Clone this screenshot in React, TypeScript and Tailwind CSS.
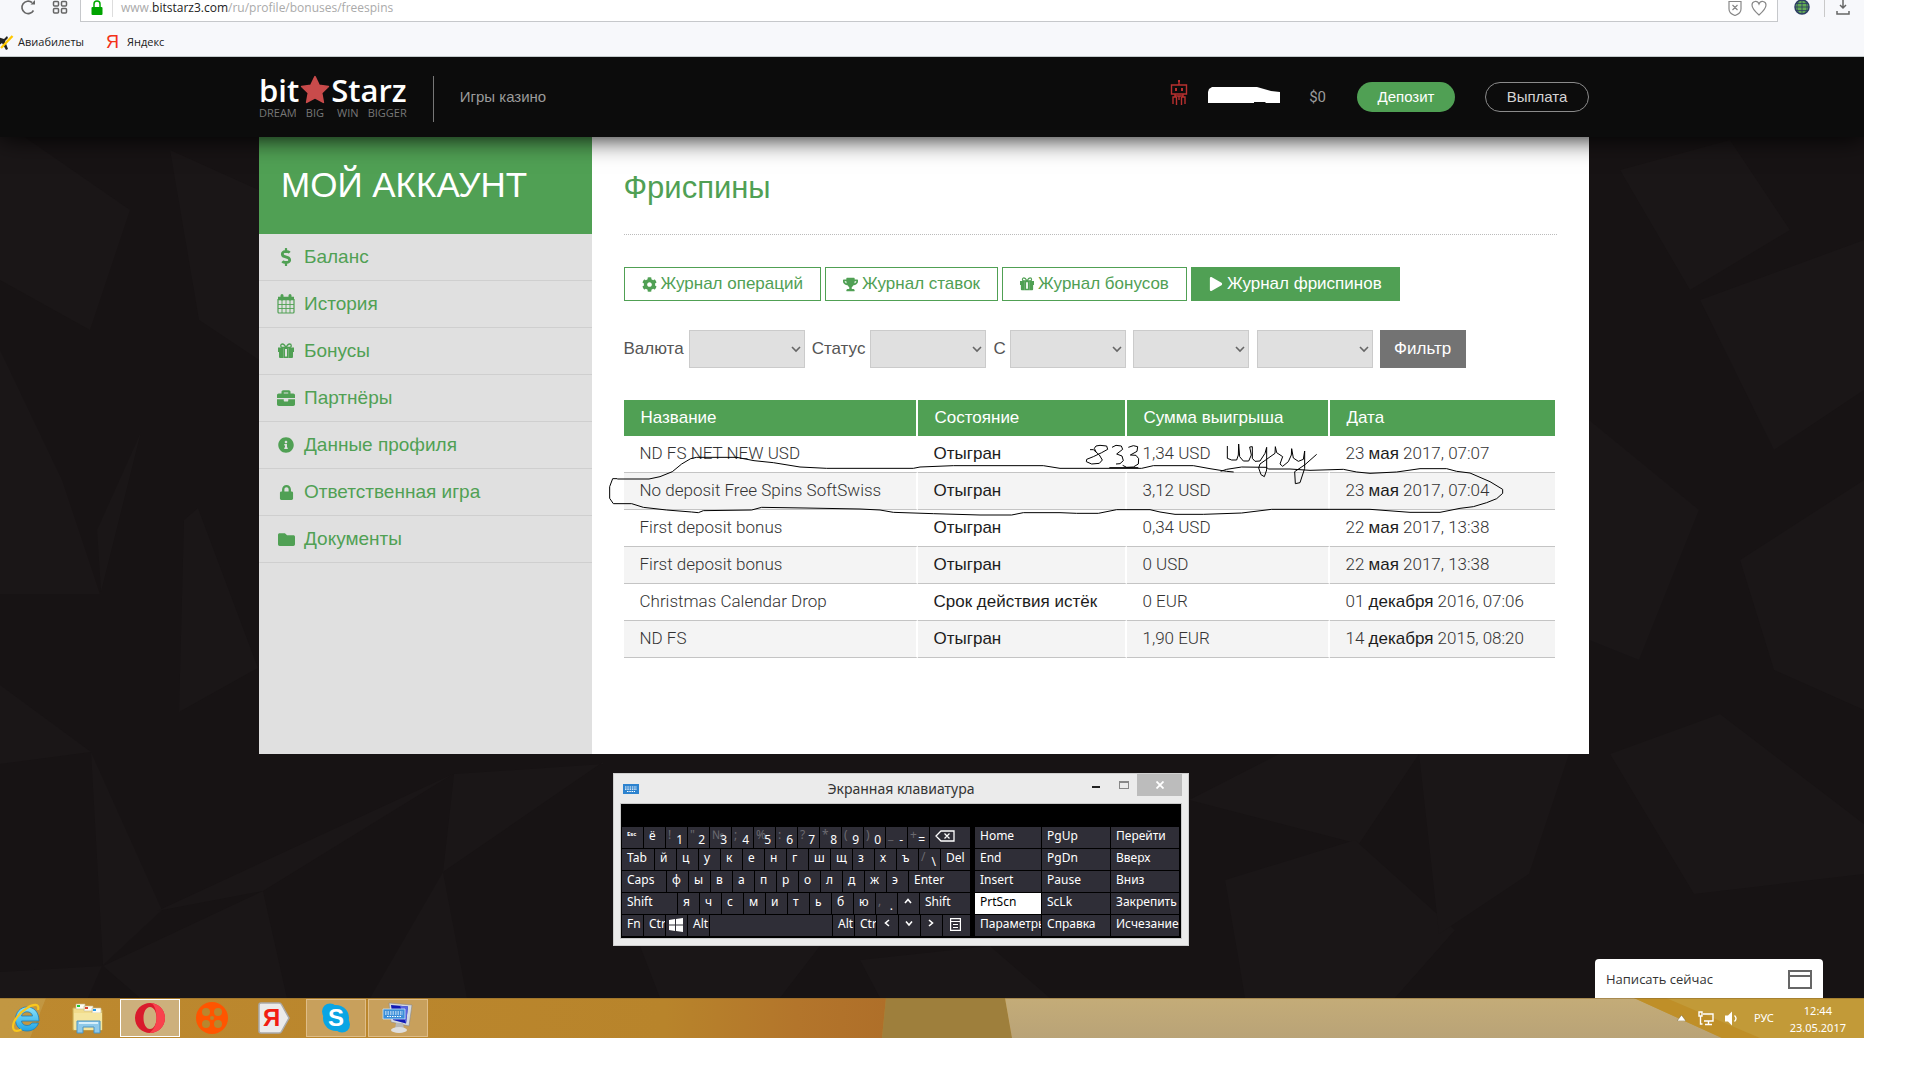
import clsx from "clsx";
import { ReactNode } from "react";
import {
	FaBriefcase,
	FaCog,
	FaDollarSign,
	FaFolder,
	FaInfoCircle,
	FaLock,
	FaPlay,
	FaTrophy,
} from "react-icons/fa";

interface SpinRow {
	name: string;
	state: string;
	amount: string;
	day: string;
	month: string;
	time: string;
}

interface KeyDef {
	label: ReactNode;
	alt?: string;
	width?: string;
}

const spins: SpinRow[] = [
	{ name: "ND FS NET NEW USD", state: "Отыгран", amount: "1,34 USD", day: "23", month: "мая", time: "2017, 07:07" },
	{ name: "No deposit Free Spins SoftSwiss", state: "Отыгран", amount: "3,12 USD", day: "23", month: "мая", time: "2017, 07:04" },
	{ name: "First deposit bonus", state: "Отыгран", amount: "0,34 USD", day: "22", month: "мая", time: "2017, 13:38" },
	{ name: "First deposit bonus", state: "Отыгран", amount: "0 USD", day: "22", month: "мая", time: "2017, 13:38" },
	{ name: "Christmas Calendar Drop", state: "Срок действия истёк", amount: "0 EUR", day: "01", month: "декабря", time: "2016, 07:06" },
	{ name: "ND FS", state: "Отыгран", amount: "1,90 EUR", day: "14", month: "декабря", time: "2015, 08:20" },
];

const CalendarIcon = () => (
	<svg className="w-[18px] h-5" fill="none" stroke="currentColor" viewBox="0 0 18 20">
		<path d="M1 5.500h16V18a1 1 0 0 1-1 1H2a1 1 0 0 1-1-1z" strokeWidth="1.200" />
		<path d="M1 4.500h16" strokeWidth="3.500" />
		<path d="M5 1.500v3.500M13 1.500v3.500" strokeLinecap="round" strokeWidth="3" />
		<path d="M5 6v13M9 6v13M13 6v13M1 10.500h16M1 14.500h16" strokeWidth="0.900" />
	</svg>
);

const GiftIcon = ({ className }: { className: string }) => (
	<svg className={className} fill="currentColor" viewBox="0 0 16 16">
		<path d="M0 4.500h5.500v4.500H0zM10.500 4.500H16v4.500h-5.500zM1 9h4.500v6H2a1 1 0 0 1-1-1zM10.500 9H15v5a1 1 0 0 1-1 1h-3.500z" />
		<path d="M5.500 4.500h5V15h-5zM7 6v7.500h2V6z" fillRule="evenodd" />
		<path d="M8 4.500C7 2.500 6 1 4.500 1a1.750 1.750 0 0 0 0 3.500zM8 4.500C9 2.500 10 1 11.500 1a1.750 1.750 0 0 1 0 3.500z" fill="none" stroke="currentColor" strokeWidth="1.300" />
	</svg>
);

const menu = [
	{ label: "Баланс", icon: <FaDollarSign className="size-[18px]" /> },
	{ label: "История", icon: <CalendarIcon /> },
	{ label: "Бонусы", icon: <GiftIcon className="size-4" /> },
	{ label: "Партнёры", icon: <FaBriefcase className="size-[18px]" /> },
	{ label: "Данные профиля", icon: <FaInfoCircle className="size-4" /> },
	{ label: "Ответственная игра", icon: <FaLock className="size-[15px]" /> },
	{ label: "Документы", icon: <FaFolder className="size-[17px]" /> },
];

const tabs = [
	{ label: "Журнал операций", icon: <FaCog className="size-[15px]" /> },
	{ label: "Журнал ставок", icon: <FaTrophy className="size-[15px]" /> },
	{ label: "Журнал бонусов", icon: <GiftIcon className="size-[14px]" /> },
	{ label: "Журнал фриспинов", icon: <FaPlay className="size-[14px]" />, active: true },
];

const letters = (text: string): KeyDef[] =>
	text.split("").map((label) => ({ label }));

const Arrow = ({ d }: { d: string }) => (
	<svg className="size-[10px]" fill="none" stroke="white" strokeWidth="1.600" viewBox="0 0 10 10">
		<path d={d} />
	</svg>
);

const keyRows: KeyDef[][] = [
	[
		{ label: <span className="text-[6px] font-bold block -mt-1">Esc</span> },
		{ label: "ё" },
		{ label: "1", alt: "!" },
		{ label: "2", alt: '"' },
		{ label: "3", alt: "№" },
		{ label: "4", alt: ";" },
		{ label: "5", alt: "%" },
		{ label: "6", alt: ":" },
		{ label: "7", alt: "?" },
		{ label: "8", alt: "*" },
		{ label: "9", alt: "(" },
		{ label: "0", alt: ")" },
		{ label: "-", alt: "_" },
		{ label: "=", alt: "+" },
		{
			label: (
				<svg className="w-5 h-3" fill="none" stroke="white" strokeWidth="1.300" viewBox="0 0 20 12">
					<path d="M6 1h13v10H6L1 6zM9.500 3.500l5 5M14.500 3.500l-5 5" />
				</svg>
			),
			width: "w-10",
		},
	],
	[
		{ label: "Tab", width: "w-8" },
		...letters("йцукенгшщзхъ"),
		{ label: "\\", alt: "/" },
		{ label: "Del", width: "w-[29px]" },
	],
	[
		{ label: "Caps", width: "w-11" },
		...letters("фывапролджэ"),
		{ label: "Enter", width: "w-[61px]" },
	],
	[
		{ label: "Shift", width: "w-[55px]" },
		...letters("ячсмитьбю"),
		{ label: ".", alt: "," },
		{ label: <Arrow d="M2 7l3-3.500L8 7" /> },
		{ label: "Shift", width: "w-[50px]" },
	],
	[
		{ label: "Fn" },
		{ label: "Ctrl" },
		{
			label: (
				<svg className="-ml-[2px] size-[14px]" fill="white" viewBox="0 0 14 14">
					<path d="M0 2l6-1v5.500H0zM7 .9L14 0v6.500H7zM0 7.500h6V13l-6-1zM7 7.500h7V14l-7-.9z" />
				</svg>
			),
		},
		{ label: "Alt" },
		{ label: "", width: "w-[122px]" },
		{ label: "Alt" },
		{ label: "Ctrl" },
		{ label: <Arrow d="M7 2L3.500 5 7 8" /> },
		{ label: <Arrow d="M2 3.500L5 7l3-3.500" /> },
		{ label: <Arrow d="M3 2l3.500 3L3 8" /> },
		{
			label: (
				<svg className="ml-[2px] w-[11px] h-[13px]" fill="none" stroke="white" strokeWidth="1.200" viewBox="0 0 11 13">
					<path d="M.6.6h9.800v11.800H.6zM.6 3.500h9.800M3 6.500h5M3 9.500h5" />
				</svg>
			),
			width: "w-[27px]",
		},
	],
];

const sideKeys = [
	["Home", "PgUp", "Перейти"],
	["End", "PgDn", "Вверх"],
	["Insert", "Pause", "Вниз"],
	["PrtScn", "ScLk", "Закрепить"],
	["Параметры", "Справка", "Исчезание"],
];

const BrowserChrome = () => (
	<div className="relative z-20 bg-[#f7f8fb] border-b border-[#c4cbcc] font-['Open_Sans','Noto_Sans',sans-serif]">
		<div className="flex items-start h-[22px] pr-[14px]">
			<button aria-label="Обновить" className="ml-5 w-4">
				<svg className="size-4" fill="none" stroke="#666" strokeWidth="1.600" viewBox="0 0 16 16">
					<path d="M13.500 10.500A6.200 6.200 0 1 1 12 2.500" />
					<path d="M10.500 4.500H15V0z" fill="#666" stroke="none" />
				</svg>
			</button>
			<button aria-label="Экспресс-панель" className="ml-4 w-4">
				<svg className="size-4" fill="none" stroke="#666" strokeWidth="1.500" viewBox="0 0 16 16">
					<rect height="4.500" rx="1" width="5" x="1.500" y="1.500" />
					<rect height="4.500" rx="1" width="5" x="9.500" y="1.500" />
					<rect height="4.500" rx="1" width="5" x="1.500" y="8.500" />
					<rect height="4.500" rx="1" width="5" x="9.500" y="8.500" />
				</svg>
			</button>
			<div className="ml-3 flex-1 flex items-start h-[22px] bg-white border-b border-x border-[#c6c8cb] pl-[10px] pr-[10px]">
				<svg className="w-3 h-[15px]" viewBox="0 0 12 15">
					<path d="M3 7V4a3 3 0 0 1 6 0v3" fill="none" stroke="#0a0" strokeWidth="1.500" />
					<rect fill="#00a300" height="8" rx="1" width="11" x=".5" y="7" />
				</svg>
				<span className="ml-[9px] w-px h-[17px] bg-[#ddd]" />
				<span className="ml-2 flex-1 text-xs text-[#aaa]">
					www.<span className="text-[#222]">bitstarz3.com</span>
					/ru/profile/bonuses/freespins
				</span>
				<svg className="w-[14px] h-4" fill="none" stroke="#888" strokeWidth="1.200" viewBox="0 0 14 16">
					<path d="M1 1.500h12V9c0 3-3 5.500-6 6.500C4 14.500 1 12 1 9zM4.500 5l5 5M9.500 5l-5 5" />
				</svg>
				<svg className="ml-[9px] w-4 h-4" fill="none" stroke="#888" strokeWidth="1.200" viewBox="0 0 16 16">
					<path d="M8 15C4 11.500 1 8.500 1 5c0-4 5.500-5 7-1 1.500-4 7-3 7 1 0 3.500-3 6.500-7 10z" />
				</svg>
			</div>
			<svg className="ml-4 size-4" fill="none" viewBox="0 0 16 16">
				<circle cx="8" cy="7" fill="#63ab54" r="7" stroke="#2c3d63" strokeWidth="1.500" />
				<path d="M8 0v14M1 7h14M2 3.500h12M2 10.500h12M4.500 1.500c-2 4-2 7 0 11M11.500 1.500c2 4 2 7 0 11" stroke="#2c3d63" strokeWidth=".8" />
			</svg>
			<span className="ml-[14px] w-px h-[17px] bg-[#c9c9c9]" />
			<svg className="ml-[11px] w-[14px] h-4" fill="none" stroke="#666" strokeWidth="1.500" viewBox="0 0 14 16">
				<path d="M7 0v8M4 5l3 3 3-3M1 11v3h12v-3" />
			</svg>
		</div>
		<div className="flex items-center h-[34px] pb-1 pt-[10px] text-[11px] text-[#222]">
			<a className="flex items-center gap-1" href="#avia">
				<svg className="w-[14px] h-4" viewBox="3 0 14 16">
					<path d="M0 3l7 2 3-3 1 2-3 3 3 8-2 1-4-7-5 4z" fill="#222" />
					<path d="M4 14L15.500 2" stroke="#ffc800" strokeWidth="2.400" />
				</svg>
				Авиабилеты
			</a>
			<a className="ml-[22px] flex items-center gap-2" href="#yandex">
				<span className="text-lg leading-4 text-[#f33219] font-['Liberation_Sans',sans-serif]">Я</span>
				Яндекс
			</a>
		</div>
	</div>
);

const Header = () => (
	<header className="relative z-10 bg-[#0c0c0c] pr-4 shadow-[0_0_25px_#000] text-[15px]">
		<div className="mx-auto max-w-[1330px] h-20 flex items-center">
			<a className="block" href="#home">
				<span className="flex items-center text-white font-['Open_Sans',sans-serif] font-semibold text-[31px] leading-[30px]">
					bit
					<svg className="size-[30px] mx-px" fill="#c94b4b" viewBox="0 0 28 28">
						<path d="M14 1.500l3.800 8 8.700 1.200-6.300 6.100 1.600 8.700-7.800-4.200-7.800 4.200 1.600-8.700-6.300-6.100 8.700-1.200z" stroke="#c94b4b" strokeLinejoin="round" strokeWidth="1.500" />
					</svg>
					Starz
				</span>
				<span className="mt-px flex justify-between text-[11px] leading-[14px] text-[#777] font-['Open_Sans',sans-serif]">
					<span>DREAM</span>
					<span>BIG</span>
					<span className="ml-1">WIN</span>
					<span>BIGGER</span>
				</span>
			</a>
			<span className="ml-[26px] mt-1 w-px h-[46px] bg-[#777]" />
			<a className="ml-[26px] text-[#9b9b9b]" href="#games">
				Игры казино
			</a>
			<svg className="ml-auto mb-2 w-[18px] h-[26px]" fill="none" stroke="#b8302f" strokeWidth="1.400" viewBox="0 0 18 26">
				<path d="M1.500 5h15v9h-15zM9 5V1M5 14v2h8v-2M3 24v-7h3M6.500 25v-8M9 20v-4M11.500 25v-8M12 17h3v7" />
				<path d="M6 8v3M12 8v3M9 0v2" strokeWidth="2" />
			</svg>
			<svg className="ml-5 w-[72px] h-[18px] mb-1" fill="white" viewBox="0 0 72 18">
				<path d="M1 3l3-2 45 0 7 2 7 2 9 1v11H58l-1-1H46v1H0V6z" />
			</svg>
			<span className="ml-[29px] text-[#9b9b9b] font-['Roboto',sans-serif]">$0</span>
			<button className="ml-[31px] h-[30px] w-[98px] rounded-full bg-[#50a054] text-white">
				Депозит
			</button>
			<button className="ml-[30px] h-[30px] w-[104px] rounded-full border border-[#8b8b8b] text-[#d5d5d5]">
				Выплата
			</button>
		</div>
	</header>
);

const Backdrop = () => (
	<svg className="absolute inset-0 w-full h-full" preserveAspectRatio="none" viewBox="0 57 1864 941">
		<rect fill="#171314" height="941" width="1864" y="57" />
		<g fill="#1a1617">
			<path d="M0 594h100L62 480 0 350z" />
			<path d="M97 530l4 62 40-160z" />
			<path d="M184 520l-5 192 79-44-60-160z" />
			<path d="M0 685l91 67-91 12z" />
			<path d="M91 752l12 213 59-55z" />
			<path d="M157 911l296-137-190 117z" />
			<path d="M103 966l160-75 24 107H140z" />
			<path d="M454 774l-11 98 160-110V764z" />
			<path d="M443 872l-73 126h97z" />
			<path d="M0 972l102-6-14 32H0z" />
			<path d="M0 120l130 90-40 120L0 280z" />
			<path d="M170 150l89 40v170l-60-40z" />
			<path d="M1189 800l90-46h140l-60 90z" />
			<path d="M1225 880l130-40 100 90-60 68h-150z" />
			<path d="M1419 754h150l-40 120-90 60z" />
			<path d="M1589 420l110 90-60 150-50-20z" />
			<path d="M1700 300l164-60v150l-90 60z" />
			<path d="M1740 560l124-80v230l-90-40z" />
			<path d="M1620 170l110-30 60 90-100 60z" />
			<path d="M1610 754l110-40 144 110v50l-170 20z" />
			<path d="M640 946h180l-40 52H660z" />
			<path d="M860 960l130-14 60 52H880z" />
		</g>
	</svg>
);

const Sidebar = () => (
	<aside className="w-1/4 bg-[#e0e0e0] text-[#50a054]">
		<h1 className="h-[97px] pl-[22px] pt-[27px] bg-[#50a054] text-white text-[35px] leading-[42px]">
			МОЙ АККАУНТ
		</h1>
		<nav>
			{menu.map(({ label, icon }) => (
				<a
					className="flex items-center h-[47px] pl-4 border-b border-[#cfcfcf] text-[19px]"
					href="#account"
					key={label}
				>
					<span className="w-[22px] mr-[7px] flex justify-center">{icon}</span>
					{label}
				</a>
			))}
		</nav>
	</aside>
);

const FilterSelect = ({ label, className }: { label: string; className?: string }) => (
	<span className={clsx("relative block", className)}>
		<select
			aria-label={label}
			className="block appearance-none w-[116px] h-[38px] bg-[#e0e0e0] border border-[#cbcbcb]"
		/>
		<svg className="pointer-events-none absolute right-1 top-4 w-[10px] h-[7px]" fill="none" stroke="#666" strokeWidth="1.600" viewBox="0 0 10 7">
			<path d="M1 1l4 4 4-4" />
		</svg>
	</span>
);

/* Pen marks drawn over the table */
const Ink = () => (
	<svg
		className="pointer-events-none absolute -left-6 top-[30px] w-[940px] h-[100px]"
		fill="none"
		stroke="black"
		strokeLinejoin="round"
		strokeWidth="3"
		viewBox="0 120 2820 300"
	>
		<path d="M52 267H147L180 260 217 245 245 222 272 206 290 202H410L462 212 520 218 600 231 680 235H940L960 231 1060 227H1330L1380 235H1625" />
		<path d="M1380 368H1270L1235 375H1140L1000 371 880 367 840 360 780 357 615 354 485 352 455 360 310 362 295 368 275 366 200 360 130 352 95 341H40L29 325V290L38 266H52" />
		<g transform="translate(1380 0)">
			<path d="M245 235L280 227H400L450 236 500 244 521 246M482 244L500 238 545 231 620 232 625 237H690L750 241 850 238 890 246 930 250 1010 246 1080 236H1160L1190 244 1230 249 1260 262 1290 275 1328 298V310L1310 326 1280 338 1240 350 1200 355 1140 367H1050L930 358H635L545 369 430 373H345L300 366 270 359H170L115 370H50L0 368" />
			<path d="M90 179h10l8 7M108 186L103 175 108 168 120 166 140 168 143 178 125 188 100 200 80 208 79 215 95 222 118 220 127 210 118 195 108 186" />
			<path d="M156 172L168 166 184 168 188 178 170 192 186 198 190 212 180 221 168 222M148 233H235" />
			<path d="M205 172L220 167 233 170 231 184 211 195 228 196 236 206 235 222 220 231 200 232 188 226" />
			<path d="M502 168V205L515 210 530 210 535 195 536 162 539 200 550 213 566 213 574 195 569 171 577 170V205L585 214 600 213 615 190 620 172V240L613 260 603 254 596 234 600 222 645 190 646 170 650 188 668 200 660 222 668 229 685 215 694 195 695 176 700 204 715 214 730 208 734 183V235L720 278 706 281 704 245 735 224 770 193" />
		</g>
	</svg>
);

const SpinsTable = () => (
	<div className="relative mt-8">
		<table className="w-[calc(100%-2px)] table-fixed border-separate border-spacing-0 text-left text-[17px]">
			<colgroup>
				<col className="w-[294px]" />
				<col className="w-[209px]" />
				<col className="w-[203px]" />
				<col />
			</colgroup>
			<thead>
				<tr className="h-9 bg-[#50a054] text-white">
					{["Название", "Состояние", "Сумма выигрыша", "Дата"].map((title) => (
						<th
							className="pl-[17px] font-normal border-r-2 border-white last:border-r-0"
							key={title}
						>
							{title}
						</th>
					))}
				</tr>
			</thead>
			<tbody>
				{spins.map((row, index) => (
					<tr
						className="h-[37px] even:bg-[#f4f4f4] font-['Roboto',sans-serif] font-light text-[#333] [&>td]:border-b [&>td]:border-b-[#c4c4c4] [&>td]:pl-4"
						key={index}
					>
						<td className="border-r-2 border-r-white">{row.name}</td>
						<td className="border-r-2 border-r-white font-['Liberation_Sans',sans-serif] text-[#1c1c1c]">
							{row.state}
						</td>
						<td className="border-r-2 border-r-white">{row.amount}</td>
						<td>
							{row.day}{" "}
							<span className="font-['Liberation_Sans',sans-serif] text-[#1c1c1c]">
								{row.month}
							</span>{" "}
							{row.time}
						</td>
					</tr>
				))}
			</tbody>
		</table>
		<Ink />
	</div>
);

const Content = () => (
	<main className="flex-1 bg-white px-8 pb-24">
		<h2 className="h-[97px] pt-[33px] text-[31px] leading-9 text-[#50a054]">Фриспины</h2>
		<hr className="border-0 border-t border-dotted border-[#bbb]" />
		<div className="mt-8 flex gap-1">
			{tabs.map(({ label, icon, active }) => (
				<button
					className={clsx(
						"h-[34px] px-[17px] flex items-center gap-1 border border-[#50a054] text-[17px]",
						active ? "bg-[#50a054] text-white" : "text-[#50a054]",
					)}
					key={label}
				>
					{icon}
					{label}
				</button>
			))}
		</div>
		<form className="mt-[29px] flex items-center text-[17px] text-[#555]">
			<span>Валюта</span>
			<FilterSelect className="ml-[5px]" label="Валюта" />
			<span className="ml-[7px]">Статус</span>
			<FilterSelect className="ml-[5px]" label="Статус" />
			<span className="ml-[7px]">С</span>
			<FilterSelect className="ml-1" label="День" />
			<FilterSelect className="ml-[7px]" label="Месяц" />
			<FilterSelect className="ml-2" label="Год" />
			<button className="ml-[7px] w-[86px] h-[38px] bg-[#737373] text-white" type="button">
				Фильтр
			</button>
		</form>
		<SpinsTable />
	</main>
);

const Key = ({ label, alt, width }: KeyDef) => (
	<button
		className={clsx(
			"relative h-[21px] shrink-0 overflow-hidden bg-[#2f2e37] pl-[5px] flex items-start",
			width ?? "w-[21px]",
		)}
	>
		{alt ? (
			<>
				<span className="absolute left-[2px] -top-px text-[#6b6a70]">{alt}</span>
				<span className="absolute right-1 top-1">{label}</span>
			</>
		) : typeof label === "string" ? (
			label
		) : (
			<span className="pt-[3px]">{label}</span>
		)}
	</button>
);

const OnScreenKeyboard = () => (
	<section className="absolute left-[613px] top-[716px] w-[576px] h-[173px] bg-[#ebebeb] border border-[#cfcfcf] font-['Noto_Sans',sans-serif]">
		<div className="relative flex h-[29px] items-center justify-center text-sm text-[#333]">
			<svg className="absolute left-[9px] top-[10px] w-4 h-[10px]" viewBox="0 0 16 10">
				<rect fill="#2d83cf" height="10" width="16" />
				<path d="M2 3h12M2 5.200h12M4 7.500h8" stroke="white" strokeDasharray="1.500 .8" strokeWidth="1.200" />
			</svg>
			Экранная клавиатура
			<div className="absolute right-[6px] top-0 flex">
				<button aria-label="Свернуть" className="w-7 h-[22px] flex items-center justify-center">
					<span className="w-2 h-[2px] mt-1 bg-[#222]" />
				</button>
				<button aria-label="Развернуть" className="w-[27px] h-[22px] flex items-center justify-center">
					<span className="w-[10px] h-2 border border-t-2 border-[#888]" />
				</button>
				<button aria-label="Закрыть" className="w-[45px] h-[22px] flex items-center justify-center bg-[#bcbcbc]">
					<svg className="size-2" stroke="white" strokeWidth="1.800" viewBox="0 0 8 8">
						<path d="M.5.5l7 7M7.500.5l-7 7" />
					</svg>
				</button>
			</div>
		</div>
		<div className="mx-[6px] border border-[#c9c9c9] bg-black pt-[23px] pb-[2px] pl-px pr-[2px] flex justify-between text-xs leading-[17px] text-white">
			<div className="flex flex-col gap-px">
				{keyRows.map((row, index) => (
					<div className="flex gap-px" key={index}>
						{row.map((key, i) => (
							<Key key={i} {...key} />
						))}
					</div>
				))}
			</div>
			<div className="grid grid-cols-[66px_68px_68px] gap-px">
				{sideKeys.flat().map((label) => (
					<button
						className={clsx(
							"h-[21px] overflow-hidden pl-[5px] flex items-start whitespace-nowrap",
							label === "PrtScn" ? "bg-white text-black" : "bg-[#2f2e37]",
						)}
						key={label}
					>
						{label}
					</button>
				))}
			</div>
		</div>
	</section>
);

const ChatWidget = () => (
	<button className="absolute bottom-0 right-[41px] w-[228px] h-[39px] rounded-t bg-white flex items-center justify-between px-[11px] pt-[2px] text-[13px] text-[#333] font-['Open_Sans',sans-serif]">
		Написать сейчас
		<svg className="w-6 h-5" fill="none" stroke="#666" strokeWidth="2" viewBox="0 0 24 20">
			<path d="M1 1h22v17H1zM1 6h22" />
		</svg>
	</button>
);

const TaskButton = ({ label, state, children }: { label: string; state?: "open" | "active"; children: ReactNode }) => (
	<button
		aria-label={label}
		className={clsx(
			"w-[60px] h-[38px] flex items-center justify-center border",
			!state && "border-transparent",
			state === "open" && "border-[#dfbd88] bg-[#c8a05c]",
			state === "active" && "border-white bg-[#cdb07c]",
		)}
	>
		{children}
	</button>
);

const Taskbar = () => (
	<footer className="relative h-10 bg-[#b8862e] font-['Noto_Sans',sans-serif] text-[11px] text-white">
		<svg className="absolute inset-0 w-full h-full" preserveAspectRatio="none" viewBox="0 0 1864 40">
			<defs>
				<linearGradient id="warm" x1="0" x2="1">
					<stop offset="0" stopColor="#bd892f" />
					<stop offset=".75" stopColor="#b8842b" />
					<stop offset=".9" stopColor="#b3752b" />
					<stop offset="1" stopColor="#af6f29" />
				</linearGradient>
				<linearGradient id="sand" x1="0" x2="0" y1="0" y2="1">
					<stop offset="0" stopColor="#c4ac78" />
					<stop offset="1" stopColor="#b9a377" />
				</linearGradient>
			</defs>
			<path d="M0 0h886l-4 40H0z" fill="url(#warm)" />
			<path d="M0 0h46L30 40H0z" fill="#c4a050" opacity=".6" />
			<path d="M886 0h119l7 40H882z" fill="#9e7f3c" />
			<path d="M1005 0h640l85 40h-718z" fill="url(#sand)" />
			<path d="M1634 0h230v40h-142z" fill="#c29a38" />
			<path d="M1634 0h32l94 40h-38z" fill="#bf8f28" />
			<path d="M0 .5h1864" stroke="#8d6a2c" opacity=".5" />
		</svg>
		<div className="relative h-full flex items-center">
			<div className="-ml-1 flex gap-[2px]">
				<TaskButton label="Internet Explorer">
					<svg className="w-8 h-8" fill="none" viewBox="0 0 32 32">
						<defs>
							<linearGradient id="ie" x1="0" x2="0" y1="0" y2="1">
								<stop offset="0" stopColor="#8be3fb" />
								<stop offset="1" stopColor="#1fa3e4" />
							</linearGradient>
						</defs>
						<path d="M29 19H11.500c.3 2.700 2.500 4.500 5.500 4.500 2.300 0 4-1 5-2.500h6.500C26.800 26 22.700 29 17 29 10 29 5.500 24.300 5.500 17.500S10 5 17 5s12 5 12 14zM22.500 14c-.4-2.500-2.500-4.200-5.500-4.200S12 11.500 11.500 14z" fill="url(#ie)" stroke="#1b7dbb" strokeWidth=".8" />
						<path d="M28 8c2-7-5-6-11-2C9 11 1 21 3.500 27c1.500 3 5 2 8 .5" stroke="#f8c71e" strokeWidth="2.200" />
					</svg>
				</TaskButton>
				<TaskButton label="Проводник">
					<svg className="w-8 h-8" viewBox="0 0 32 32">
						<path d="M1 6h10l2 2h17v20H1z" fill="#f1dc8c" stroke="#c9ac54" />
						<path d="M4 2h9v5H4zM12 4h9v5h-9zM20 6h9v5h-9z" fill="#fdfdf4" stroke="#c9bb8c" strokeWidth=".6" />
						<path d="M5 3h3v2H5z" fill="#2c3" />
						<path d="M13 5h3v2h-3z" fill="#d43" />
						<path d="M21 7h3v2h-3z" fill="#29e" />
						<path d="M2 11h28v17H2z" fill="#f5e59f" />
						<path d="M5 31V19h23v12h-6v-6H11v6z" fill="#8ec9ea" stroke="#4a93c0" />
						<path d="M7 20h19v2H7z" fill="#d6effb" />
					</svg>
				</TaskButton>
				<TaskButton label="Opera" state="active">
					<svg className="w-8 h-8" viewBox="0 0 32 32">
						<path d="M16 1C8 1 1 7.500 1 16s7 15 15 15 15-6.500 15-15S24 1 16 1zm0 4c4 0 6.500 5 6.500 11S20 27 16 27 9.500 22 9.500 16 12 5 16 5z" fill="#d91a2c" fillRule="evenodd" />
						<path d="M16 1c8 0 15 6.500 15 15s-7 15-15 15c-2 0 6.500-3 6.500-15S18 1 16 1z" fill="#f9424d" />
					</svg>
				</TaskButton>
				<TaskButton label="Кино">
					<svg className="w-8 h-8" viewBox="0 0 32 32">
						<circle cx="16" cy="16" fill="#ff5500" r="16" />
						<g fill="#b8862e">
							<circle cx="10" cy="10" r="4" />
							<circle cx="22" cy="10" r="4" />
							<circle cx="10" cy="22" r="4" />
							<circle cx="22" cy="22" r="4" />
							<circle cx="16" cy="16" r="2" />
						</g>
					</svg>
				</TaskButton>
				<TaskButton label="Яндекс">
					<span className="relative flex w-8 h-8 items-center">
						<svg className="absolute inset-0 w-8 h-8" viewBox="0 0 32 32">
							<path d="M3 1h18c1 0 2 .5 2.500 1.500L31 16l-7.500 13.500c-.5 1-1.500 1.500-2.500 1.500H3a2 2 0 0 1-2-2V3a2 2 0 0 1 2-2z" fill="#ebebeb" stroke="#aaa" strokeWidth="1.500" />
						</svg>
						<span className="relative ml-[5px] text-2xl font-bold text-[#f21d12] font-['Liberation_Sans',sans-serif]">Я</span>
					</span>
				</TaskButton>
				<TaskButton label="Skype" state="open">
					<span className="relative flex w-8 h-8 items-center justify-center">
						<svg className="absolute inset-0 w-8 h-8" fill="#09a5e4" viewBox="0 0 32 32">
							<circle cx="16" cy="16" r="13" />
							<circle cx="10" cy="9.500" r="8" />
							<circle cx="22" cy="22.500" r="8" />
						</svg>
						<span className="relative text-2xl font-bold text-white font-['Liberation_Sans',sans-serif]">S</span>
					</span>
				</TaskButton>
				<TaskButton label="Экранная клавиатура" state="open">
					<svg className="w-8 h-8" viewBox="0 0 32 32">
						<path d="M7 1l23 2-3 21L9 20z" fill="#d4d8dd" stroke="#888" strokeWidth=".6" />
						<path d="M9 3l17 1.500-2 17L11 18z" fill="#1019b5" />
						<path d="M18 3.700l8 .8-2 17z" fill="#5865dd" />
						<path d="M14 21h7l1 6h-9z" fill="#b8b8b8" />
						<ellipse cx="17" cy="28" fill="#dedede" rx="8" ry="3" />
						<path d="M1 7h22v10H1z" fill="#3a8ed8" stroke="#cde4f7" strokeWidth=".8" />
						<path d="M3 10h18M3 12h18M5 14.500h14" stroke="white" strokeDasharray="1.500 1" strokeWidth="1.200" />
					</svg>
				</TaskButton>
			</div>
			<div className="ml-auto flex items-center pr-[18px]">
				<svg className="w-[9px] h-[6px]" viewBox="0 0 9 6">
					<path d="M4.500 0L9 6H0z" fill="white" stroke="#75602c" strokeWidth=".5" />
				</svg>
				<svg className="ml-3 w-4 h-[15px]" fill="none" stroke="white" strokeWidth="1.400" viewBox="0 0 16 15">
					<path d="M5 3h10v7H6M10.500 10v3M7 13.500h7M1 1h3v4H1zM2.500 5v8h2" />
				</svg>
				<svg className="ml-[11px] w-[13px] h-[15px]" fill="white" viewBox="0 0 13 15">
					<path d="M0 4.500h3L7 .5v14l-4-4H0z" />
					<path d="M9.500 4.500c2 2 2 4 0 6" fill="none" stroke="white" strokeWidth="1.300" />
				</svg>
				<span className="ml-4">РУС</span>
				<span className="ml-4 mt-px flex flex-col items-center leading-[17px]">
					<span>12:44</span>
					<span>23.05.2017</span>
				</span>
			</div>
		</div>
	</footer>
);

export default function App() {
	return (
		<div className="min-h-screen flex flex-col bg-white pr-14 pb-[42px] overflow-hidden font-['Liberation_Sans',Arial,sans-serif]">
			<BrowserChrome />
			<div className="relative flex-1 overflow-hidden">
				<Backdrop />
				<Header />
				<div className="relative pr-4">
					<div className="mx-auto max-w-[1330px] flex">
						<Sidebar />
						<Content />
					</div>
				</div>
				<OnScreenKeyboard />
				<ChatWidget />
			</div>
			<Taskbar />
		</div>
	);
}
